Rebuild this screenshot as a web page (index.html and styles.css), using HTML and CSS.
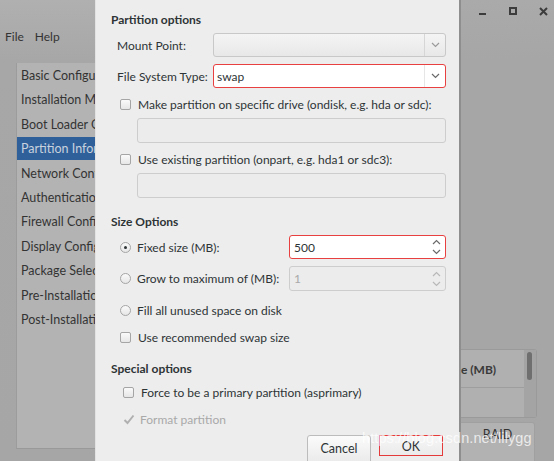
FILE: index.html
```html
<!DOCTYPE html>
<html>
<head>
<meta charset="utf-8">
<link rel="stylesheet" href="styles.css">
</head>
<body>
<div class="screen">
  <div class="left">
    <div class="menubar"><span>File</span><span>Help</span></div>
    <div class="sidebar">
      <div class="item">Basic Configuration</div>
      <div class="item">Installation Method</div>
      <div class="item">Boot Loader Options</div>
      <div class="item sel">Partition Information</div>
      <div class="item">Network Configuration</div>
      <div class="item">Authentication</div>
      <div class="item">Firewall Configuration</div>
      <div class="item">Display Configuration</div>
      <div class="item">Package Selection</div>
      <div class="item">Pre-Installation Script</div>
      <div class="item">Post-Installation Script</div>
    </div>
  </div>

  <div class="dialog">
    <div class="title t1">Partition options</div>
    <div class="row r-mount">
      <span class="label">Mount Point:</span>
      <div class="combo disabled"><span class="val"></span><span class="arrow"><svg width="9" height="6" viewBox="0 0 9 6"><path d="M1 1 L4.5 4.5 L8 1" fill="none" stroke="#9a9a9a" stroke-width="1.2"/></svg></span></div>
    </div>
    <div class="row r-fs">
      <span class="label">File System Type:</span>
      <div class="combo focus"><span class="val">swap</span><span class="arrow"><svg width="9" height="6" viewBox="0 0 9 6"><path d="M1 1 L4.5 4.5 L8 1" fill="none" stroke="#6a6a6a" stroke-width="1.2"/></svg></span></div>
    </div>
    <div class="row check r-c1"><span class="cb"></span><span>Make partition on specific drive (ondisk, e.g. hda or sdc):</span></div>
    <div class="entry e1"></div>
    <div class="row check r-c2"><span class="cb"></span><span>Use existing partition (onpart, e.g. hda1 or sdc3):</span></div>
    <div class="entry e2"></div>

    <div class="title t2">Size Options</div>
    <div class="row radio-row r-fixed">
      <span class="rb on"></span><span class="rlabel">Fixed size (MB):</span>
      <div class="spin focus"><span class="val">500</span><span class="spinarrows"><svg width="9" height="6" viewBox="0 0 9 6"><path d="M1 5 L4.5 1.5 L8 5" fill="none" stroke="#6a6a6a" stroke-width="1.2"/></svg><svg width="9" height="6" viewBox="0 0 9 6"><path d="M1 1 L4.5 4.5 L8 1" fill="none" stroke="#6a6a6a" stroke-width="1.2"/></svg></span></div>
    </div>
    <div class="row radio-row r-grow">
      <span class="rb"></span><span class="rlabel">Grow to maximum of (MB):</span>
      <div class="spin disabled"><span class="val">1</span><span class="spinarrows"><svg width="9" height="6" viewBox="0 0 9 6"><path d="M1 5 L4.5 1.5 L8 5" fill="none" stroke="#b8b8b8" stroke-width="1.2"/></svg><svg width="9" height="6" viewBox="0 0 9 6"><path d="M1 1 L4.5 4.5 L8 1" fill="none" stroke="#b8b8b8" stroke-width="1.2"/></svg></span></div>
    </div>
    <div class="row radio-row r-fill"><span class="rb"></span><span>Fill all unused space on disk</span></div>
    <div class="row check r-rec"><span class="cb"></span><span>Use recommended swap size</span></div>

    <div class="title t3">Special options</div>
    <div class="row check r-force"><span class="cb"></span><span>Force to be a primary partition (asprimary)</span></div>
    <div class="row check r-format dim"><span class="tick"><svg width="12" height="11" viewBox="0 0 12 11"><path d="M1.5 6 L4.5 9 L10.5 1.5" fill="none" stroke="#b0b0b0" stroke-width="2"/></svg></span><span>Format partition</span></div>

    <div class="buttons">
      <div class="btn">Cancel</div>
      <div class="btn ok">OK</div>
    </div>
  </div>

  <div class="right">
    <div class="winctl">
      <svg width="8" height="8" viewBox="0 0 8 8"><rect x="0" y="6" width="7" height="2" fill="#3c3c3c"/></svg>
      <svg width="8" height="8" viewBox="0 0 8 8"><rect x="1" y="1" width="6" height="6" fill="none" stroke="#3c3c3c" stroke-width="2"/></svg>
      <svg width="9" height="9" viewBox="0 0 9 9"><path d="M1 1 L8 8 M8 1 L1 8" stroke="#3c3c3c" stroke-width="2"/></svg>
    </div>
    <div class="plist">
      <div class="phead">e (MB)</div>
      <div class="pbody"></div>
      <div class="pscroll"><div class="thumb"></div></div>
    </div>
    <div class="raid">RAID</div>
  </div>

  <div class="watermark">https://blog.csdn.net/lilygg</div>
</div>
</body>
</html>
```
FILE: styles.css
```css
* { box-sizing: border-box; }
html, body { margin: 0; padding: 0; }
body {
  width: 554px;
  height: 461px;
  overflow: hidden;
  font-family: Lato, "Noto Sans", sans-serif;
  font-size: 12px;
}
.screen {
  position: relative;
  display: flex;
  width: 554px;
  height: 461px;
  background: #a6a6a6;
  overflow: hidden;
}

/* left background window */
.left {
  width: 95px;
  flex: none;
  display: flex;
  flex-direction: column;
  background: linear-gradient(#b0b0b0, #a7a7a7 60px, #a6a6a6);
  color: #333;
}
.left > * { flex-shrink: 0; }
.menubar {
  height: 63px;
  display: flex;
  gap: 11px;
  padding: 29px 0 0 5px;
  font-size: 12px;
}
.sidebar {
  margin-left: 16px;
  height: 386px;
  background: #b3b3b3;
  border-left: 1px solid #9c9c9c;
  border-bottom: 1px solid #999;
  padding-top: 1px;
  overflow: hidden;
  white-space: nowrap;
  font-size: 12.5px;
}
.item {
  height: 24.4px;
  line-height: 24px;
  padding-left: 4px;
}
.item.sel {
  background: #30609a;
  color: #c8d2de;
  height: 23px;
  line-height: 23px;
  margin-bottom: 1.4px;
}

/* dialog */
.dialog {
  width: 366px;
  flex: none;
  background: #ededed;
  border-left: 1px solid #e2e2e2;
  border-right: 2px solid #8e8e8e;
  color: #2e3436;
  padding: 0 13px 0 15px;
  display: flex;
  flex-direction: column;
}
.dialog > * { flex-shrink: 0; }
.title {
  font-weight: bold;
  height: 20px;
  line-height: 20px;
}
.t1 { margin-top: 10px; }
.t2 { margin-top: 14px; }
.t3 { margin-top: 12px; }

.row {
  display: flex;
  align-items: center;
}
.label { width: 102px; padding-left: 6px; flex: none; }
.r-mount { height: 24px; margin-top: 3px; }
.r-fs { height: 24px; margin-top: 7px; }

.combo {
  flex: 1;
  height: 24px;
  border: 1px solid #c8c8c8;
  border-radius: 3px;
  display: flex;
  align-items: center;
  background: linear-gradient(#f4f4f4, #e8e8e8);
}
.combo .val { flex: 1; padding-left: 3px; }
.combo .arrow {
  width: 21px;
  height: 100%;
  border-left: 1px solid #d6d6d6;
  display: flex;
  align-items: center;
  justify-content: center;
}
.combo.focus {
  background: #fff;
  border-color: #e84040;
}
.combo.focus .arrow { border-left-color: #e6e6e6; }

.check { height: 20px; gap: 7px; padding-left: 9px; }
.r-c1 { margin-top: 6px; }
.r-c2 { margin-top: 6px; }
.r-rec { margin-top: 7px; }
.r-force { margin-top: 3px; padding-left: 12px; }
.r-format { margin-top: 7px; padding-left: 12px; gap: 5px; }
.dim { color: #a9a9a9; }
.cb {
  width: 11px;
  height: 11px;
  border: 1px solid #a5a5a5;
  border-radius: 2px;
  background: linear-gradient(#fafafa, #e6e6e6);
  flex: none;
}
.tick { display: flex; width: 12px; height: 11px; }

.entry {
  margin-left: 26px;
  height: 25px;
  border: 1px solid #cdcdcd;
  border-radius: 3px;
  background: #ececec;
  margin-top: 4px;
}

.radio-row { gap: 6px; padding-left: 9px; }
.r-fixed { height: 24px; margin-top: 3px; }
.r-grow { height: 25px; margin-top: 7px; }
.r-fill { height: 20px; margin-top: 9px; }
.rlabel { width: 146px; flex: none; }
.rb {
  width: 11px;
  height: 11px;
  border: 1px solid #a5a5a5;
  border-radius: 50%;
  background: linear-gradient(#fafafa, #e6e6e6);
  flex: none;
  display: flex;
  align-items: center;
  justify-content: center;
}
.rb.on::after {
  content: "";
  width: 3px;
  height: 3px;
  border-radius: 50%;
  background: #2e3436;
}
.spin {
  flex: 1;
  height: 100%;
  border: 1px solid #cdcdcd;
  border-radius: 3px;
  display: flex;
  align-items: center;
}
.spin .val { flex: 1; padding-left: 4px; }
.spin.focus { background: #fff; border-color: #e84040; }
.spin.disabled { background: #ececec; color: #a9a9a9; }
.spinarrows {
  width: 17px;
  display: flex;
  flex-direction: column;
  align-items: center;
  gap: 4px;
}

.buttons {
  margin-top: 6px;
  display: flex;
  justify-content: flex-end;
  gap: 8px;
  padding-right: 3px;
}
.btn {
  width: 64px;
  height: 30px;
  border: 1px solid #bcbcbc;
  border-radius: 3px;
  background: linear-gradient(#fbfbfb, #e9e9e9);
  text-align: center;
  padding-top: 5px;
  font-size: 12.5px;
}
.btn.ok {
  border: 1px solid #e43a3a;
  border-radius: 0;
  background: linear-gradient(#f6f6f6, #ebebeb);
  height: 21px;
  padding-top: 3px;
}

/* right background window */
.right {
  flex: 1;
  display: flex;
  flex-direction: column;
  color: #333;
  background: linear-gradient(#aaaaaa, #a6a6a6 60px);
}
.right > * { flex-shrink: 0; }
.winctl {
  height: 20px;
  display: flex;
  align-items: flex-start;
  padding: 7px 0 0 18px;
  gap: 22px;
}
.plist {
  margin-top: 329px;
  width: 76px;
  height: 69px;
  border-top: 1px solid #9a9a9a;
  border-bottom: 1px solid #9a9a9a;
  border-right: 1px solid #9a9a9a;
  border-radius: 0 3px 3px 0;
  background: #b0b0b0;
  position: relative;
  display: flex;
  flex-direction: column;
}
.phead {
  height: 38px;
  line-height: 40px;
  font-weight: bold;
  color: #3a3a3a;
  border-bottom: 1px solid #9e9e9e;
  padding-right: 12px;
  white-space: nowrap;
  overflow: hidden;
}
.pbody { flex: 1; margin-right: 12px; }
.pscroll {
  position: absolute;
  right: 0;
  top: 0;
  bottom: 0;
  width: 12px;
  background: #a4a4a4;
  padding: 2px 3px;
}
.thumb {
  width: 5px;
  height: 28px;
  border-radius: 3px;
  background: #6f6f6f;
}
.raid {
  margin-top: 4px;
  width: 74px;
  height: 45px;
  border: 1px solid #a0a0a0;
  border-left: none;
  border-radius: 0 3px 0 0;
  background: #b2b2b2;
  text-align: center;
  padding-top: 4px;
  font-size: 12.5px;
  color: #333;
}

.watermark {
  position: absolute;
  left: 362px;
  top: 430px;
  font-family: "Liberation Sans", Arial, sans-serif;
  font-size: 14.5px;
  color: rgba(255, 255, 255, 0.75);
  letter-spacing: 0.1px;
  white-space: nowrap;
}
```
